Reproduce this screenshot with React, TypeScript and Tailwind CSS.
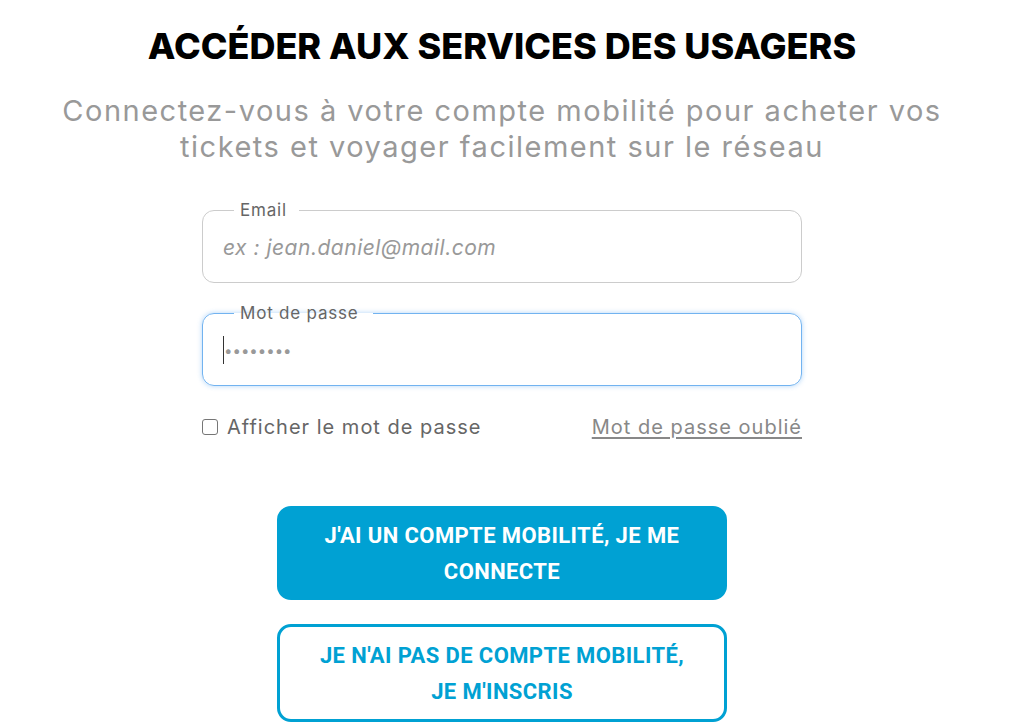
import { useState } from "react";

const poppins = "font-['Inter',sans-serif]";

export default function App() {
  const [show, setShow] = useState(false);

  return (
    <div className={`min-h-screen bg-white ${poppins}`}>
      <div className="flex flex-col items-center pr-[28px] pt-[24px]">
        <h1 className="text-[36px] leading-[44px] font-extrabold text-black">
          ACCÉDER AUX SERVICES DES USAGERS
        </h1>
        <p className="mt-[25px] text-center text-[29px] leading-[36px] text-[#999999] tracking-[1.5px]">
          Connectez-vous à votre compte mobilité pour acheter vos
          <br />
          tickets et voyager facilement sur le réseau
        </p>

        <form className="mt-[35px] w-[600px]" onSubmit={(e) => e.preventDefault()}>
          <fieldset className="rounded-[12px] border border-[#cccccc] px-[20px] pb-[13px]">
            <legend className="ml-[11px] pl-[6px] pr-[12px] text-[17px] leading-[20px] tracking-[0.8px] text-[#666666]">Email</legend>
            <input
              type="email"
              placeholder="ex : jean.daniel@mail.com"
              className="mt-[5px] h-[44px] w-full bg-transparent text-[21px] italic tracking-[0.5px] text-[#333] outline-none placeholder:text-[#999999]"
            />
          </fieldset>

          <fieldset className="mt-[20px] rounded-[12px] border border-[#72b3f0] px-[20px] pb-[13px] shadow-[0_0_5px_rgba(80,160,240,0.45)]">
            <legend className="ml-[11px] pl-[6px] pr-[14px] text-[17px] leading-[20px] tracking-[0.8px] text-[#666666]">Mot de passe</legend>
            <div className="mt-[5px] flex h-[44px] items-center">
              <span className="h-[28px] w-px shrink-0 bg-[#333333]" />
              <input
                type={show ? "text" : "password"}
                placeholder="••••••••"
                className="h-full w-full bg-transparent text-[15px] text-[#333] outline-none placeholder:text-[#999999]"
              />
            </div>
          </fieldset>

          <div className="mt-[27px] flex items-center justify-between text-[20px] leading-[28px] tracking-[1px]">
            <label className="flex items-center gap-[9px] text-[#666666]">
              <input
                type="checkbox"
                checked={show}
                onChange={(e) => setShow(e.target.checked)}
                className="h-[16px] w-[16px] shrink-0 appearance-none rounded-[3px] border border-[#767676] bg-white"
              />
              Afficher le mot de passe
            </label>
            <a href="#" className="text-[#888888] underline underline-offset-[3px]">
              Mot de passe oublié
            </a>
          </div>
        </form>

        <div className="mt-[65px] flex w-[450px] flex-col gap-[24px] font-['Roboto',sans-serif] text-[22px] font-bold leading-[36px] tracking-[0.4px]">
          <button className="rounded-[14px] bg-[#00a1d3] px-[30px] pt-[12px] pb-[10px] text-center text-white">
            J'AI UN COMPTE MOBILITÉ, JE ME CONNECTE
          </button>
          <button className="rounded-[14px] border-[3px] border-[#00a1d3] bg-white px-[30px] pt-[11px] pb-[9px] text-center text-[#00a1d3]">
            JE N'AI PAS DE COMPTE MOBILITÉ,
            <br />
            JE M'INSCRIS
          </button>
        </div>
      </div>
    </div>
  );
}
